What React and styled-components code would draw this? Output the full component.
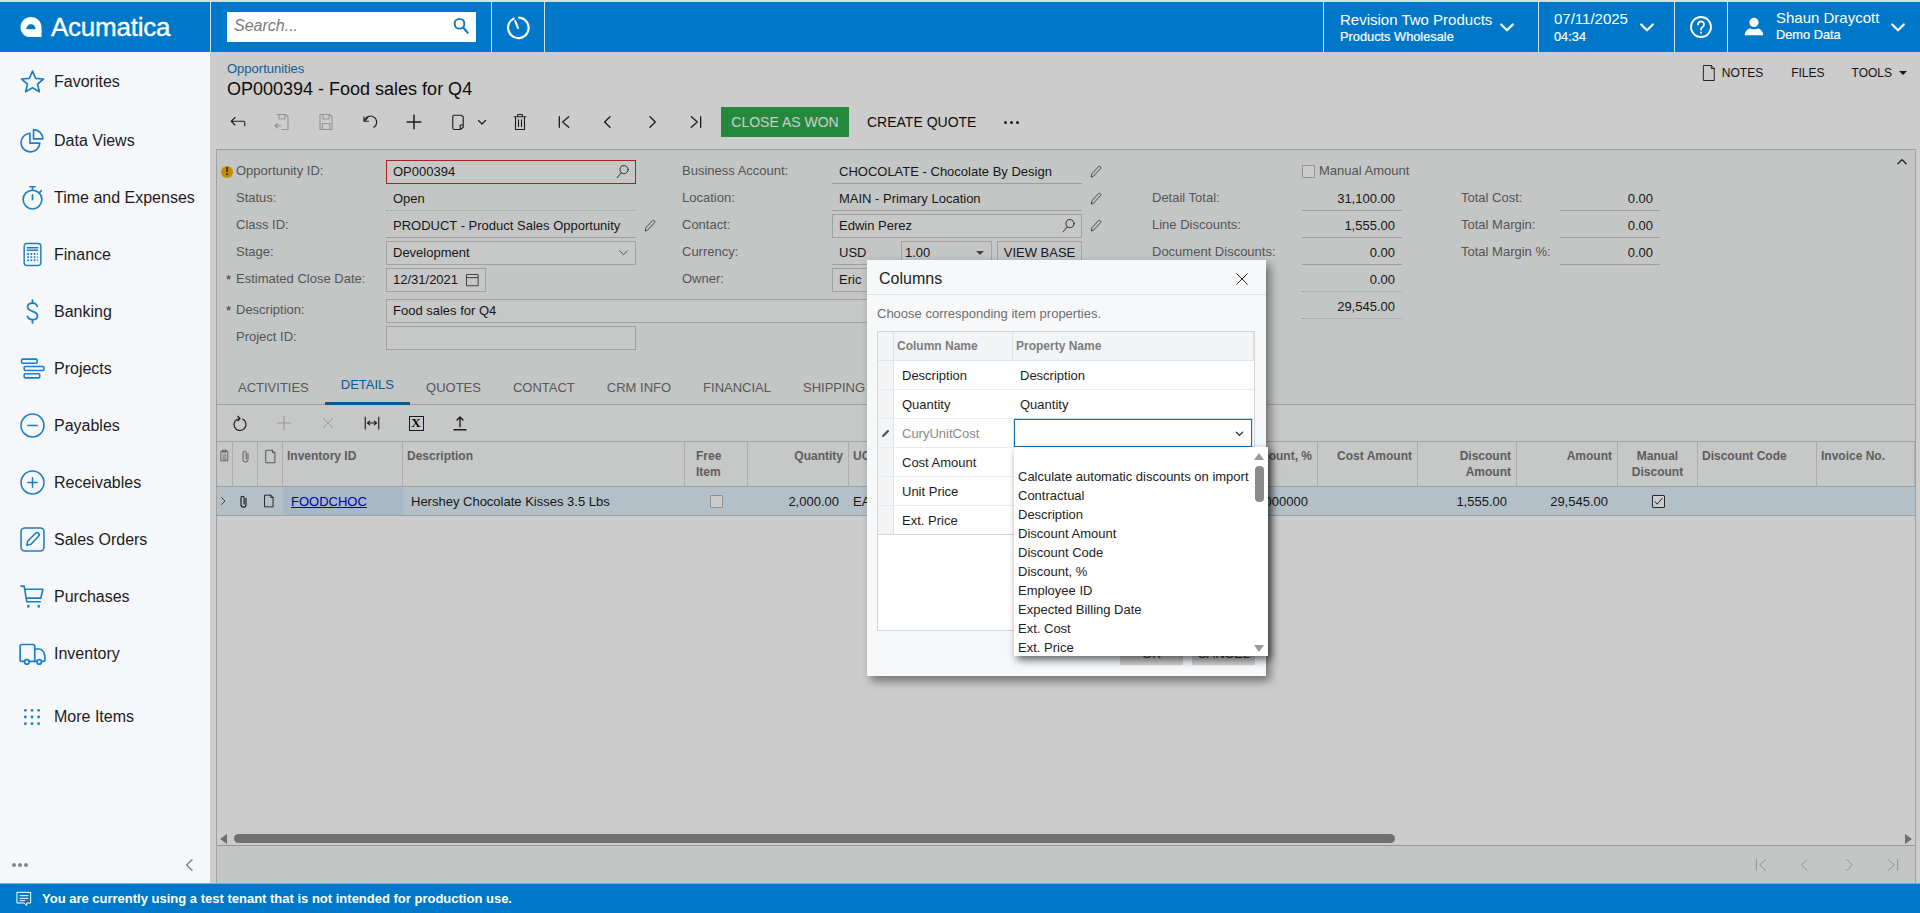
import React from 'react';
import styled, { createGlobalStyle } from 'styled-components';

const BLUE = '#0078c9';
const ICON_BLUE = '#1b7fc6';

const GlobalStyle = createGlobalStyle`
  html, body { margin: 0; padding: 0; height: 100%; }
  body { font-family: "Liberation Sans", Arial, sans-serif; font-size: 13px; color: #222; background: #fff; }
  * { box-sizing: border-box; }
`;

const Page = styled.div`
  display: flex;
  flex-direction: column;
  height: 100vh;
  overflow: hidden;
`;

const Svg = styled.svg.attrs(({ $s = 24, $vb = 24 }) => ({
  width: $s,
  height: $s,
  viewBox: `0 0 ${$vb} ${$vb}`,
  fill: 'none',
  stroke: 'currentColor',
  strokeLinecap: 'round',
  strokeLinejoin: 'round',
}))`
  display: block;
  flex: none;
  stroke-width: ${({ $w = 1.5 }) => $w};
  color: ${({ $c = 'inherit' }) => $c};
`;

/* top bar */
const TopBar = styled.header`
  display: flex;
  height: 52px;
  flex: none;
  background: ${BLUE};
  border-top: 2px solid #d3dfe8;
  color: #fff;
`;

const TopCell = styled.div`
  display: flex;
  align-items: center;
  width: ${({ $w }) => $w}px;
  flex: ${({ $grow }) => ($grow ? 1 : 'none')};
  padding-left: ${({ $pl = 0 }) => $pl}px;
  justify-content: ${({ $center }) => ($center ? 'center' : 'flex-start')};
  border-left: ${({ $line }) => ($line ? '1px solid #cfe3f2' : 'none')};
`;

const LogoText = styled.span`
  font-size: 26px;
  line-height: 30px;
  margin-left: 9px;
  letter-spacing: -0.25px;
  -webkit-text-stroke: 0.35px #fff;
`;

const SearchBox = styled.div`
  display: flex;
  align-items: center;
  justify-content: space-between;
  width: 249px;
  height: 30px;
  padding: 0 6px 2px 7px;
  background: #fff;
  color: #7b7b7b;
  font-size: 16px;
  font-style: italic;
`;

const StackText = styled.div`
  display: flex;
  flex-direction: column;
  flex: 1;
  padding: ${({ $pt = 0 }) => $pt}px 0 ${({ $pb = 0 }) => $pb}px ${({ $pl = 0 }) => $pl}px;
`;

const TopMain = styled.span`
  font-size: 15px;
  line-height: 18px;
`;

const TopSub = styled.span`
  font-size: 12.8px;
  line-height: 16px;
  margin-top: ${({ $mt = 0 }) => $mt}px;
  -webkit-text-stroke: 0.2px #fff;
`;

const TopChevron = styled.span`
  display: flex;
  margin-right: ${({ $mr = 0 }) => $mr}px;
`;

/* body */
const Body = styled.div`
  display: flex;
  flex: 1;
  min-height: 0;
`;

const Sidebar = styled.nav`
  display: flex;
  flex-direction: column;
  width: 210px;
  flex: none;
  padding-top: 3px;
  background: #f5f7fa;
`;

const SideItem = styled.div`
  display: flex;
  align-items: center;
  height: 57px;
  flex: none;
  padding-left: 20px;
  font-size: 16px;
  color: #1c1c1c;
  white-space: nowrap;

  &:first-child {
    margin-top: -2px;
    margin-bottom: 2px;
  }
  &:nth-child(12) {
    margin-top: 6px;
  }
`;

const SideIcon = styled.span`
  display: flex;
  justify-content: center;
  width: 24px;
  margin-right: 10px;
  color: ${ICON_BLUE};
`;

const SideFooter = styled.div`
  display: flex;
  align-items: center;
  justify-content: space-between;
  height: 36px;
  margin-top: auto;
  padding: 0 12px 0 12px;
  color: #7d7d85;
`;

const Dots = styled.span`
  display: flex;
  gap: ${({ $gap = 2 }) => $gap}px;

  i {
    width: ${({ $size = 4 }) => $size}px;
    height: ${({ $size = 4 }) => $size}px;
    border-radius: 50%;
    background: ${({ $c = '#85858d' }) => $c};
  }
`;

const Main = styled.main`
  position: relative;
  display: flex;
  flex-direction: column;
  flex: 1;
  min-width: 0;
  background: #fff;
`;

const Overlay = styled.div`
  position: absolute;
  inset: 0;
  z-index: 1;
  background: rgba(0, 0, 0, 0.2);
`;

const Header = styled.div`
  display: flex;
  justify-content: space-between;
  height: 97px;
  flex: none;
  padding: 9px 13px 0 6px;
`;

const TitleBlock = styled.div`
  padding-left: 11px;
`;

const Breadcrumb = styled.div`
  font-size: 13px;
  line-height: 15px;
  color: #1077b9;
`;

const Title = styled.div`
  margin-top: 2px;
  font-size: 18px;
  line-height: 22px;
  color: #111;
`;

const Toolbar = styled.div`
  display: flex;
  align-items: center;
  height: 30px;
  margin-top: 7px;
`;

const ToolIcon = styled.span`
  display: flex;
  align-items: center;
  justify-content: center;
  width: ${({ $w = 44 }) => $w}px;
  height: 30px;
  color: ${({ $off }) => ($off ? '#b9b9b9' : '#262626')};
`;

const SplitChevron = styled(ToolIcon)`
  margin: 0 7px 0 -7px;
`;

const GreenButton = styled.span`
  display: flex;
  align-items: center;
  justify-content: center;
  width: 128px;
  height: 30px;
  margin-left: 3px;
  background: #2eac4b;
  color: #fff;
  font-size: 14px;
`;

const TextButton = styled.span`
  padding: 0 18px;
  font-size: 14px;
  color: #111;
`;

const Actions = styled.div`
  display: flex;
  align-items: center;
  height: 24px;
  font-size: 12px;
  color: #1a1a1a;
`;

const ActionItem = styled.span`
  display: flex;
  align-items: center;
  gap: 4px;
  margin-left: ${({ $ml = 0 }) => $ml}px;
`;

const Caret = styled.i`
  width: 0;
  height: 0;
  margin-left: 3px;
  border-left: 4px solid transparent;
  border-right: 4px solid transparent;
  border-top: 4px solid ${({ $c = '#222' }) => $c};
`;

/* form */
const Panel = styled.section`
  display: flex;
  flex-direction: column;
  flex: 1;
  min-height: 0;
  margin: 0 4px 0 6px;
  background: #f6f8f8;
  border: 1px solid #c8c8c8;
  border-bottom: none;
`;

const Collapse = styled.span`
  position: absolute;
  top: 103px;
  right: 11px;
  color: #222;
`;

const FormColumns = styled.div`
  display: flex;
  height: 143px;
  flex: none;
  padding-top: 8px;
`;

const FormColumn = styled.div`
  width: ${({ $w }) => $w}px;
  flex: none;
`;

const Field = styled.div`
  display: flex;
  align-items: center;
  height: 27px;
`;

const Mark = styled.span`
  display: flex;
  align-items: center;
  justify-content: flex-end;
  width: 19px;
  padding-right: ${({ $pr = 2 }) => $pr}px;
  flex: none;
  color: #444;
`;

const Warn = styled.span`
  display: flex;
  align-items: center;
  justify-content: center;
  width: 12px;
  height: 12px;
  border-radius: 50%;
  background: #f0b400;
  color: #222;
  font-size: 10px;
  font-weight: 700;
`;

const Label = styled.span`
  width: ${({ $w }) => $w}px;
  flex: none;
  padding-bottom: 2px;
  color: #6a6a6a;
  white-space: nowrap;
`;

const InputBox = styled.div`
  display: flex;
  align-items: center;
  justify-content: space-between;
  width: ${({ $w = 250 }) => $w}px;
  height: 24px;
  flex: none;
  padding: 0 5px 0 6px;
  background: ${({ $plain }) => ($plain ? 'transparent' : '#f8f9f9')};
  border: 1px solid ${({ $error }) => ($error ? '#d52b2b' : '#c9c9c9')};
  color: #1c1c1c;
  white-space: nowrap;
`;

const ReadValue = styled.div`
  display: flex;
  align-items: center;
  justify-content: ${({ $right }) => ($right ? 'flex-end' : 'flex-start')};
  width: ${({ $w = 250 }) => $w}px;
  height: 24px;
  flex: none;
  padding: ${({ $right }) => ($right ? '0 7px 0 0' : '0 0 0 7px')};
  border-bottom: 1px ${({ $dotted }) => ($dotted ? 'dotted' : 'solid')} #c6c6c6;
  color: #1c1c1c;
`;

const PencilSlot = styled.span`
  display: flex;
  margin-left: 7px;
  color: #444;
`;

const RateBox = styled(InputBox)`
  margin-left: 0;
  padding: 0 7px 0 3px;
`;

const ViewBase = styled.span`
  display: flex;
  align-items: center;
  justify-content: center;
  width: 85px;
  height: 24px;
  margin-left: 5px;
  border: 1px solid #c9c9c9;
  font-size: 13px;
  color: #222;
`;

const CheckBox = styled.span`
  display: flex;
  align-items: center;
  justify-content: center;
  width: 13px;
  height: 13px;
  flex: none;
  background: #fff;
  border: 1px solid ${({ $dark }) => ($dark ? '#333' : '#b4b4b4')};
  border-radius: 1px;
  color: #222;
`;

const CheckLabel = styled.span`
  margin-left: 4px;
  padding-bottom: 2px;
  color: #6a6a6a;
`;

const DescBlock = styled.div`
  margin-top: 4px;
`;

/* tabs */
const Tabs = styled.div`
  display: flex;
  height: 54px;
  flex: none;
  align-items: flex-end;
  padding-left: 5px;
  border-bottom: 1px solid #c9c9c9;
`;

const Tab = styled.span`
  display: flex;
  align-items: center;
  height: 36px;
  padding: ${({ $active }) => ($active ? '0 16px 3px' : '0 16px')};
  margin-bottom: -1px;
  color: ${({ $active }) => ($active ? '#0b72b5' : '#6f6f6f')};
  border-bottom: ${({ $active }) => ($active ? '3px solid #0b72b5' : 'none')};
`;

const GridBar = styled.div`
  display: flex;
  align-items: center;
  height: 36px;
  flex: none;
  padding-left: 1px;
  background: #f8f9f9;
`;

const GridIcon = styled.span`
  display: flex;
  align-items: center;
  justify-content: center;
  width: 44px;
  color: ${({ $off }) => ($off ? '#bdbdbd' : '#222')};
`;

const ExcelMark = styled.span`
  display: flex;
  align-items: center;
  justify-content: center;
  width: 15px;
  height: 15px;
  border: 1.5px solid #222;
  font-family: "Liberation Serif", serif;
  font-size: 13px;
  font-weight: 700;
  color: #111;
`;

/* grid */
const columns = '16px 25px 25px 120px 282px 63px 101px 100px 269px 100px 100px 99px 101px 80px 119px 1fr';

const GridHead = styled.div`
  display: grid;
  grid-template-columns: ${columns};
  height: 46px;
  flex: none;
  background: #f8f9f9;
  border-top: 1px solid #c9c9c9;
  border-bottom: 1px solid #c9c9c9;
`;

const HeadCell = styled.div`
  padding: 6px ${({ $right }) => ($right ? '5px' : '4px')} 0 ${({ $pl = 4 }) => $pl}px;
  border-right: 1px solid #d9d9d9;
  font-size: 12px;
  font-weight: 700;
  line-height: 16px;
  color: #757575;
  white-space: pre-line;
  text-align: ${({ $right, $mid }) => ($right ? 'right' : $mid ? 'center' : 'left')};
`;

const HeadIcon = styled(HeadCell)`
  display: flex;
  justify-content: center;
  padding: 7px 0 0;
  color: #666;
`;

const GridRow = styled.div`
  display: grid;
  grid-template-columns: ${columns};
  height: 29px;
  flex: none;
  align-items: stretch;
  background: #e1f0fa;
  border-bottom: 1px solid #c9c9c9;
`;

const Cell = styled.div`
  display: flex;
  align-items: center;
  justify-content: ${({ $right, $mid }) => ($right ? 'flex-end' : $mid ? 'center' : 'flex-start')};
  padding: 0 ${({ $right }) => ($right ? '10px' : '4px')} 0 ${({ $pl = 4 }) => $pl}px;
  background: ${({ $active }) => ($active ? '#d1e6f8' : 'transparent')};
  color: #1c1c1c;
  white-space: nowrap;
`;

const Link = styled.a`
  color: #0000d8;
  text-decoration: underline;
`;

const Spacer = styled.div`
  flex: 1;
  background: #fff;
`;

const HScroll = styled.div`
  display: flex;
  align-items: center;
  height: 14px;
  flex: none;
  padding: 0 3px;
  background: #fff;
  border-bottom: 1px solid #bcbcbc;
`;

const Arrow = styled.i`
  width: 0;
  height: 0;
  border-top: 5px solid transparent;
  border-bottom: 5px solid transparent;
  ${({ $dir }) => ($dir === 'left' ? 'border-right: 7px solid #8b8b8b;' : 'border-left: 7px solid #8b8b8b; margin-left: auto;')}
`;

const HThumb = styled.div`
  width: 1161px;
  height: 9px;
  margin-left: 7px;
  border-radius: 5px;
  background: #8c8c8c;
`;

const Pager = styled.div`
  display: flex;
  align-items: center;
  justify-content: flex-end;
  height: 37px;
  flex: none;
  color: #b2b2b2;
`;

const PagerIcon = styled.span`
  display: flex;
  justify-content: center;
  width: 44px;
`;

/* dialog */
const Dialog = styled.div`
  position: absolute;
  z-index: 2;
  left: 657px;
  top: 208px;
  display: flex;
  flex-direction: column;
  width: 399px;
  height: 416px;
  background: #f7f8fa;
  box-shadow: 4px 5px 9px rgba(0, 0, 0, 0.45);
`;

const DialogHead = styled.div`
  display: flex;
  align-items: center;
  justify-content: space-between;
  height: 35px;
  flex: none;
  padding: 3px 15px 0 12px;
  border-bottom: 1px solid #dfe2e5;
  font-size: 16px;
  color: #1c1c1c;
`;

const DialogHint = styled.div`
  padding: 11px 0 0 10px;
  line-height: 15px;
  height: 36px;
  flex: none;
  color: #6e6e6e;
`;

const MapTable = styled.div`
  display: flex;
  flex-direction: column;
  width: 378px;
  height: 300px;
  flex: none;
  margin-left: 10px;
  background: #fff;
  border: 1px solid #d5d5d5;
`;

const mapColumns = '16px 119px 1fr';

const MapHead = styled.div`
  display: grid;
  grid-template-columns: ${mapColumns};
  height: 29px;
  flex: none;
  background: #f3f4f6;
  border-bottom: 1px solid #e2e6e9;
`;

const MapHeadCell = styled.div`
  display: flex;
  align-items: center;
  padding-left: 3px;
  border-right: 1px solid #dfe2e5;
  font-size: 12px;
  font-weight: 700;
  color: #7c7c7c;
`;

const MapRow = styled.div`
  display: grid;
  grid-template-columns: ${mapColumns};
  height: 29px;
  flex: none;
  border-bottom: 1px solid #e4edf2;

  &:last-child {
    border-bottom-color: #d5d5d5;
  }
`;

const Gutter = styled.div`
  display: flex;
  align-items: center;
  justify-content: center;
  background: #f3f4f6;
  border-right: 1px solid #dfe2e5;
  color: #555;
`;

const MapCell = styled.div`
  display: flex;
  align-items: center;
  padding-left: ${({ $pl = 8 }) => $pl}px;
  color: ${({ $muted }) => ($muted ? '#8a8a8a' : '#1c1c1c')};
`;

const EditCell = styled.div`
  display: flex;
  align-items: center;
  justify-content: flex-end;
  height: 28px;
  margin: 0 2px 0 1px;
  padding-right: 6px;
  border: 1px solid #0b72b5;
  box-shadow: 0 0 1px #0b72b5;
  color: #222;
`;

const DialogFooter = styled.div`
  display: flex;
  justify-content: flex-end;
  gap: 9px;
  padding: 10px 11px 0 0;
`;

const DialogButton = styled.span`
  display: flex;
  align-items: center;
  justify-content: center;
  width: 63px;
  height: 24px;
  background: #d4d4d4;
  color: #333;
`;

const Dropdown = styled.div`
  position: absolute;
  z-index: 3;
  left: 147px;
  top: 187px;
  display: flex;
  width: 254px;
  height: 209px;
  background: #fff;
  box-shadow: 3px 4px 8px rgba(0, 0, 0, 0.6);
`;

const OptionList = styled.div`
  flex: 1;
  overflow: hidden;
  padding: 1px 0 0 4px;
`;

const Option = styled.div`
  height: 19px;
  line-height: 19px;
  color: #222;
  white-space: nowrap;
`;

const VScroll = styled.div`
  display: flex;
  flex-direction: column;
  align-items: center;
  width: 14px;
  flex: none;
  padding: 6px 4px 4px 0;
`;

const VArrow = styled.i`
  width: 0;
  height: 0;
  margin-top: ${({ $down }) => ($down ? 'auto' : '0')};
  border-left: 5px solid transparent;
  border-right: 5px solid transparent;
  ${({ $down }) => ($down ? 'border-top: 7px solid #9a9a9a;' : 'border-bottom: 7px solid #9a9a9a;')}
`;

const VThumb = styled.div`
  width: 9px;
  height: 36px;
  margin-top: 6px;
  border-radius: 4px;
  background: #8b8b8b;
`;

/* status bar */
const StatusBar = styled.footer`
  display: flex;
  align-items: center;
  gap: 10px;
  height: 30px;
  flex: none;
  padding-left: 16px;
  background: ${BLUE};
  border-top: 1px solid #5db8ef;
  color: #fff;
  font-weight: 700;
  font-size: 13px;
`;

/* icons */
const Logo = () => (
  <Svg $s={22} $vb={24} $w={0}>
    <path
      fill="#fff"
      fillRule="evenodd"
      d="M12 1C5.700 1 .5 6 .5 12.200c0 6 4.700 10.800 10.500 10.800H23.500V12.200C23.500 6 18.300 1 12 1zM7 14.500c0-3.200 2.200-5.500 5-5.500s5 2.300 5 5.500z"
    />
  </Svg>
);

const SearchIcon = () => (
  <Svg $s={18} $w={2.6} $c="#0a78c8">
    <circle cx="10" cy="9" r="6.500" />
    <path d="M15 14l6 7" />
  </Svg>
);

const Loupe = () => (
  <Svg $s={15} $w={1.500} $c="#333">
    <circle cx="14.500" cy="9" r="6.500" />
    <path d="M10 14l-6.500 8" />
  </Svg>
);

const HistoryIcon = () => (
  <Svg $s={26} $w={2} $c="#fff">
    <path d="M8 4.300a9.500 9.500 0 1 0 5-1" />
    <path d="M12 13L9.500 6.500" />
  </Svg>
);

const ChevronDown = ({ s = 20, w = 2.6, c }) => (
  <Svg $s={s} $w={w} $c={c}>
    <path d="M5 9l7 7 7-7" />
  </Svg>
);

const HelpIcon = () => (
  <Svg $s={24} $w={1.800}>
    <circle cx="12" cy="12" r="10" />
    <path d="M9 9.500a3 3 0 1 1 4.600 2.500c-1 .7-1.600 1.300-1.600 2.500" />
    <path d="M12 17.500v.3" />
  </Svg>
);

const PersonIcon = () => (
  <Svg $s={22} $w={0}>
    <circle cx="12" cy="7" r="5" fill="#fff" />
    <path d="M2 21c0-5 3.500-7.500 6-7.500 2 1.300 6 1.300 8 0 2.500 0 6 2.500 6 7.500z" fill="#fff" />
  </Svg>
);

const sideIcons = {
  star: (
    <Svg $s={25} $w={1.600}>
      <path d="M12 2l3 7 7.500.6-5.700 4.900 1.800 7.400L12 18l-6.600 3.900 1.800-7.400L1.500 9.600 9 9z" />
    </Svg>
  ),
  pie: (
    <Svg $s={25} $w={1.600}>
      <path d="M9.500 5a9 9 0 1 0 9.500 9.500H9.500z" />
      <path d="M13 1.500a9 9 0 0 1 9 9h-9z" />
    </Svg>
  ),
  timer: (
    <Svg $s={25} $w={1.600}>
      <circle cx="12" cy="14" r="9" />
      <path d="M9.500 1.700h5M12 1.700V5M12 9.500V14M18.500 7.500l2-2" />
    </Svg>
  ),
  calc: (
    <Svg $s={25} $w={1.400}>
      <rect x="4" y="1.500" width="16" height="21" rx="2.500" />
      <path d="M7 5.500h10M7 8h10" />
      <path strokeDasharray="1.600 1.500" strokeLinecap="butt" strokeWidth="1.800" d="M7 11.500h10M7 14.500h10M7 17.500h10" />
    </Svg>
  ),
  dollar: (
    <Svg $s={25} $w={1.700}>
      <path d="M16.500 7c-.5-2-2.200-3-4.500-3-2.800 0-4.700 1.500-4.700 3.700 0 5 9.500 3.300 9.500 8.300 0 2.300-2 3.800-4.800 3.800-2.600 0-4.300-1.200-4.800-3.200" />
      <path d="M12 1v3M12 20v3" />
    </Svg>
  ),
  bars: (
    <Svg $s={25} $w={1.500}>
      <rect x="1.500" y="3" width="15" height="4" rx="1.200" />
      <rect x="4" y="10" width="19" height="4" rx="1.200" />
      <rect x="4" y="17" width="15" height="4" rx="1.200" />
    </Svg>
  ),
  minus: (
    <Svg $s={25} $w={1.500}>
      <circle cx="12" cy="12" r="11" />
      <path d="M7.500 12h9" />
    </Svg>
  ),
  plus: (
    <Svg $s={25} $w={1.500}>
      <circle cx="12" cy="12" r="11" />
      <path d="M7.500 12h9M12 7.500v9" />
    </Svg>
  ),
  pen: (
    <Svg $s={25} $w={1.500}>
      <rect x="1" y="1" width="22" height="22" rx="3.500" />
      <path d="M6.500 17.500l1-4L15 6c.8-.8 2-.8 2.800 0s.8 2 0 2.800L10.500 16.500z" />
    </Svg>
  ),
  cart: (
    <Svg $s={25} $w={1.600}>
      <path d="M1 2h3l2.500 15h13M5 5h17l-2 8.500H6.500" />
      <path strokeWidth="2.400" d="M8 21v.5M18 21v.5" />
    </Svg>
  ),
  truck: (
    <Svg $s={27} $w={1.500}>
      <path d="M5 19H2.500A1.500 1.500 0 0 1 1 17.500v-12A1.500 1.500 0 0 1 2.500 4h10A1.500 1.500 0 0 1 14 5.500V19H9" />
      <path d="M14 8h4c3 0 5 4 5 7v2.500A1.500 1.500 0 0 1 21.500 19H20M16 19h-2" />
      <circle cx="7" cy="19.500" r="2" />
      <circle cx="18" cy="19.500" r="2" />
    </Svg>
  ),
  dots: (
    <Svg $s={20} $w={3.400}>
      <path d="M4 4h.01M12 4h.01M20 4h.01M4 12h.01M12 12h.01M20 12h.01M4 20h.01M12 20h.01M20 20h.01" />
    </Svg>
  ),
};

const T = ({ d, s = 20, w = 1.500 }) => (
  <Svg $s={s} $w={w}>
    <path d={d} />
  </Svg>
);

const PATHS = {
  back: 'M8 6l-5 5 5 5M3 11h16.500c1 0 1.500 .7 1.500 1.500V17',
  saveBack: 'M5 2h12l3 3v17H12M8 2v6h8V2M3 17h7M6 14l-3 3 3 3',
  save: 'M4 2h13l3 3v17H4zM8 2v6h8V2M7 22v-8h10v8',
  undo: 'M9 6L4 11V5M4 11h6M5 11a8 8 0 1 1 12 8',
  plus: 'M12 3v18M3 12h18',
  clip: 'M7 3h9l3 2v14l-4 3H7a2 2 0 0 1-2-2V5a2 2 0 0 1 2-2zM19 16h-4v6',
  trash: 'M4 5h16M9 5V2h6v3M6 5v17h12V5M10 9v9M14 9v9',
  first: 'M5 4v16M19 4l-9 8 9 8',
  prev: 'M15 4l-8 8 8 8',
  next: 'M9 4l8 8-8 8',
  last: 'M5 4l9 8-9 8M19 4v16',
  caretRight: 'M9 5l7 7-7 7',
  close: 'M5 5l14 14M19 5L5 19',
  refresh: 'M9 3l3 3-3 3M12 6a8 8 0 1 0 3.500 .8',
  fit: 'M3 4v16M21 4v16M6 12h12M9 9.500L6 12l3 2.500M15 9.500l3 2.500-3 2.500',
  upload: 'M12 17V4M8 8l4-4 4 4M4 21h16',
  clipBoard: 'M6 4h12v18H6zM9 2h6v4H9zM9 11h6M9 15h6M9 19h6',
  paper: 'M16 7v10a4 4 0 0 1-8 0V6a2.500 2.500 0 0 1 5 0v10',
  file: 'M5 2h10l4 4v16H5zM15 2v4h4',
  pencil: 'M4 20l1-5L16 3c1-1 2.500-1 3.500 0s1 2.500 0 3.500L8 19z',
  calendar: 'M3 4h18v18H3zM3 9h18',
  up: 'M5 15l7-7 7 7',
};

const Pencil = () => <T d={PATHS.pencil} s={14} w={1.500} />;

const sideItems = [
  ['star', 'Favorites'],
  ['pie', 'Data Views'],
  ['timer', 'Time and Expenses'],
  ['calc', 'Finance'],
  ['dollar', 'Banking'],
  ['bars', 'Projects'],
  ['minus', 'Payables'],
  ['plus', 'Receivables'],
  ['pen', 'Sales Orders'],
  ['cart', 'Purchases'],
  ['truck', 'Inventory'],
  ['dots', 'More Items'],
];

const tabs = ['ACTIVITIES', 'DETAILS', 'QUOTES', 'CONTACT', 'CRM INFO', 'FINANCIAL', 'SHIPPING', 'ATTRIBUTES'];

const headers = [
  { text: 'Inventory ID' },
  { text: 'Description' },
  { text: 'Free\nItem', pl: 11 },
  { text: 'Quantity', right: true },
  { text: 'UOM' },
  { text: '' },
  { text: 'Discount, %', right: true },
  { text: 'Cost Amount', right: true },
  { text: 'Discount\nAmount', right: true },
  { text: 'Amount', right: true },
  { text: 'Manual\nDiscount', mid: true },
  { text: 'Discount Code' },
  { text: 'Invoice No.' },
];

const mapRows = [
  ['Description', 'Description'],
  ['Quantity', 'Quantity'],
  ['CuryUnitCost', null],
  ['Cost Amount', ''],
  ['Unit Price', ''],
  ['Ext. Price', ''],
];

const options = [
  '',
  'Calculate automatic discounts on import',
  'Contractual',
  'Description',
  'Discount Amount',
  'Discount Code',
  'Discount, %',
  'Employee ID',
  'Expected Billing Date',
  'Ext. Cost',
  'Ext. Price',
];

const App = () => (
  <Page>
    <GlobalStyle />
    <TopBar>
      <TopCell $w={210} $pl={20}>
        <Logo />
        <LogoText>Acumatica</LogoText>
      </TopCell>
      <TopCell $w={281} $pl={16} $line>
        <SearchBox>
          Search...
          <SearchIcon />
        </SearchBox>
      </TopCell>
      <TopCell $w={53} $center $line>
        <HistoryIcon />
      </TopCell>
      <TopCell $grow $line />
      <TopCell $w={215} $pl={16} $line>
        <StackText $pt={1}>
          <TopMain>Revision Two Products</TopMain>
          <TopSub>Products Wholesale</TopSub>
        </StackText>
        <TopChevron $mr={21}>
          <ChevronDown />
        </TopChevron>
      </TopCell>
      <TopCell $w={136} $pl={15} $line>
        <StackText>
          <TopMain>07/11/2025</TopMain>
          <TopSub $mt={1}>04:34</TopSub>
        </StackText>
        <TopChevron $mr={17}>
          <ChevronDown />
        </TopChevron>
      </TopCell>
      <TopCell $w={53} $center $line>
        <HelpIcon />
      </TopCell>
      <TopCell $w={193} $pl={15} $line>
        <PersonIcon />
        <StackText $pl={11} $pb={2}>
          <TopMain>Shaun Draycott</TopMain>
          <TopSub>Demo Data</TopSub>
        </StackText>
        <TopChevron $mr={12}>
          <ChevronDown />
        </TopChevron>
      </TopCell>
    </TopBar>

    <Body>
      <Sidebar>
        {sideItems.map(([icon, label]) => (
          <SideItem key={label}>
            <SideIcon>{sideIcons[icon]}</SideIcon>
            {label}
          </SideItem>
        ))}
        <SideFooter>
          <Dots>
            <i />
            <i />
            <i />
          </Dots>
          <T d={PATHS.prev} s={16} w={2} />
        </SideFooter>
      </Sidebar>

      <Main>
        <Header>
          <div>
            <TitleBlock>
              <Breadcrumb>Opportunities</Breadcrumb>
              <Title>OP000394 - Food sales for Q4</Title>
            </TitleBlock>
            <Toolbar>
              <ToolIcon><T d={PATHS.back} s={18} /></ToolIcon>
              <ToolIcon $off><T d={PATHS.saveBack} s={18} /></ToolIcon>
              <ToolIcon $off><T d={PATHS.save} s={18} /></ToolIcon>
              <ToolIcon><T d={PATHS.undo} s={18} /></ToolIcon>
              <ToolIcon><T d={PATHS.plus} s={18} w={2} /></ToolIcon>
              <ToolIcon><T d={PATHS.clip} s={18} /></ToolIcon>
              <SplitChevron $w={18}><ChevronDown s={12} w={2.500} /></SplitChevron>
              <ToolIcon><T d={PATHS.trash} s={18} /></ToolIcon>
              <ToolIcon><T d={PATHS.first} s={16} w={2} /></ToolIcon>
              <ToolIcon><T d={PATHS.prev} s={16} w={2} /></ToolIcon>
              <ToolIcon><T d={PATHS.next} s={16} w={2} /></ToolIcon>
              <ToolIcon><T d={PATHS.last} s={16} w={2} /></ToolIcon>
              <GreenButton>CLOSE AS WON</GreenButton>
              <TextButton>CREATE QUOTE</TextButton>
              <ToolIcon $w={34}>
                <Dots $size={3} $gap={3} $c="#222">
                  <i />
                  <i />
                  <i />
                </Dots>
              </ToolIcon>
            </Toolbar>
          </div>
          <Actions>
            <ActionItem>
              <T d={PATHS.file} s={18} w={1.200} />
              NOTES
            </ActionItem>
            <ActionItem $ml={28}>FILES</ActionItem>
            <ActionItem $ml={27}>
              TOOLS
              <Caret />
            </ActionItem>
          </Actions>
        </Header>

        <Panel>
          <Collapse>
            <T d={PATHS.up} s={14} w={2.200} />
          </Collapse>
          <FormColumns>
            <FormColumn $w={465}>
              <Field>
                <Mark $pr={3}><Warn>!</Warn></Mark>
                <Label $w={150}>Opportunity ID:</Label>
                <InputBox $error>OP000394<Loupe /></InputBox>
              </Field>
              <Field>
                <Mark />
                <Label $w={150}>Status:</Label>
                <ReadValue $dotted>Open</ReadValue>
              </Field>
              <Field>
                <Mark />
                <Label $w={150}>Class ID:</Label>
                <ReadValue>PRODUCT - Product Sales Opportunity</ReadValue>
                <PencilSlot><Pencil /></PencilSlot>
              </Field>
              <Field>
                <Mark />
                <Label $w={150}>Stage:</Label>
                <InputBox>Development<ChevronDown s={13} w={1.800} c="#666" /></InputBox>
              </Field>
              <Field>
                <Mark $pr={5}>*</Mark>
                <Label $w={150}>Estimated Close Date:</Label>
                <InputBox $w={100}>12/31/2021<T d={PATHS.calendar} s={15} w={1.200} /></InputBox>
              </Field>
            </FormColumn>
            <FormColumn $w={470}>
              <Field>
                <Label $w={150}>Business Account:</Label>
                <ReadValue>CHOCOLATE - Chocolate By Design</ReadValue>
                <PencilSlot><Pencil /></PencilSlot>
              </Field>
              <Field>
                <Label $w={150}>Location:</Label>
                <ReadValue>MAIN - Primary Location</ReadValue>
                <PencilSlot><Pencil /></PencilSlot>
              </Field>
              <Field>
                <Label $w={150}>Contact:</Label>
                <InputBox>Edwin Perez<Loupe /></InputBox>
                <PencilSlot><Pencil /></PencilSlot>
              </Field>
              <Field>
                <Label $w={150}>Currency:</Label>
                <ReadValue $w={69}>USD</ReadValue>
                <RateBox $w={91} $plain>1.00<Caret $c="#555" /></RateBox>
                <ViewBase>VIEW BASE</ViewBase>
              </Field>
              <Field>
                <Label $w={150}>Owner:</Label>
                <InputBox>Eric</InputBox>
              </Field>
            </FormColumn>
            <FormColumn $w={309}>
              <Field>
                <Label $w={150} />
                <CheckBox />
                <CheckLabel>Manual Amount</CheckLabel>
              </Field>
              <Field>
                <Label $w={150}>Detail Total:</Label>
                <ReadValue $w={100} $right>31,100.00</ReadValue>
              </Field>
              <Field>
                <Label $w={150}>Line Discounts:</Label>
                <ReadValue $w={100} $right>1,555.00</ReadValue>
              </Field>
              <Field>
                <Label $w={150}>Document Discounts:</Label>
                <ReadValue $w={100} $right>0.00</ReadValue>
              </Field>
              <Field>
                <Label $w={150} />
                <ReadValue $w={100} $right $dotted>0.00</ReadValue>
              </Field>
              <Field>
                <Label $w={150} />
                <ReadValue $w={100} $right $dotted>29,545.00</ReadValue>
              </Field>
            </FormColumn>
            <FormColumn $w={199}>
              <Field />
              <Field>
                <Label $w={99}>Total Cost:</Label>
                <ReadValue $w={100} $right>0.00</ReadValue>
              </Field>
              <Field>
                <Label $w={99}>Total Margin:</Label>
                <ReadValue $w={100} $right>0.00</ReadValue>
              </Field>
              <Field>
                <Label $w={99}>Total Margin %:</Label>
                <ReadValue $w={100} $right>0.00</ReadValue>
              </Field>
            </FormColumn>
          </FormColumns>
          <DescBlock>
            <Field>
              <Mark $pr={5}>*</Mark>
              <Label $w={150}>Description:</Label>
              <InputBox $w={696}>Food sales for Q4</InputBox>
            </Field>
            <Field>
              <Mark />
              <Label $w={150}>Project ID:</Label>
              <InputBox />
            </Field>
          </DescBlock>
          <Tabs>
            {tabs.map((tab) => (
              <Tab key={tab} $active={tab === 'DETAILS'}>{tab}</Tab>
            ))}
          </Tabs>
          <GridBar>
            <GridIcon><T d={PATHS.refresh} s={18} /></GridIcon>
            <GridIcon $off><T d={PATHS.plus} s={18} /></GridIcon>
            <GridIcon $off><T d={PATHS.close} s={16} /></GridIcon>
            <GridIcon><T d={PATHS.fit} s={18} /></GridIcon>
            <GridIcon><ExcelMark>X</ExcelMark></GridIcon>
            <GridIcon><T d={PATHS.upload} s={18} w={1.800} /></GridIcon>
          </GridBar>
          <GridHead>
            <HeadIcon><T d={PATHS.clipBoard} s={13} /></HeadIcon>
            <HeadIcon><T d={PATHS.paper} s={15} /></HeadIcon>
            <HeadIcon><T d={PATHS.file} s={15} /></HeadIcon>
            {headers.map((h, i) => (
              <HeadCell key={i} $right={h.right} $mid={h.mid} $pl={h.pl}>{h.text}</HeadCell>
            ))}
          </GridHead>
          <GridRow>
            <Cell $mid $pl={0}><T d={PATHS.caretRight} s={12} w={1.500} /></Cell>
            <Cell $mid $pl={0}><T d={PATHS.paper} s={15} w={1.800} /></Cell>
            <Cell $mid $pl={0}><T d={PATHS.file} s={14} /></Cell>
            <Cell $active $pl={8}><Link>FOODCHOC</Link></Cell>
            <Cell $pl={8}>Hershey Chocolate Kisses 3.5 Lbs</Cell>
            <Cell $mid><CheckBox /></Cell>
            <Cell $right>2,000.00</Cell>
            <Cell $pl={4}>EA</Cell>
            <Cell />
            <Cell $right>0.000000</Cell>
            <Cell />
            <Cell $right>1,555.00</Cell>
            <Cell $right>29,545.00</Cell>
            <Cell $mid>
              <CheckBox $dark>
                <Svg $s={11} $w={2}><path d="M4 12l5 6L20 5" /></Svg>
              </CheckBox>
            </Cell>
            <Cell />
            <Cell />
          </GridRow>
          <Spacer />
          <HScroll>
            <Arrow $dir="left" />
            <HThumb />
            <Arrow $dir="right" />
          </HScroll>
          <Pager>
            <PagerIcon><T d={PATHS.first} s={16} /></PagerIcon>
            <PagerIcon><T d={PATHS.prev} s={16} /></PagerIcon>
            <PagerIcon><T d={PATHS.next} s={16} /></PagerIcon>
            <PagerIcon><T d={PATHS.last} s={16} /></PagerIcon>
          </Pager>
        </Panel>

        <Overlay />

        <Dialog>
          <DialogHead>
            Columns
            <T d={PATHS.close} s={18} w={1.300} />
          </DialogHead>
          <DialogHint>Choose corresponding item properties.</DialogHint>
          <MapTable>
            <MapHead>
              <Gutter />
              <MapHeadCell>Column Name</MapHeadCell>
              <MapHeadCell>Property Name</MapHeadCell>
            </MapHead>
            {mapRows.map(([name, prop]) => (
              <MapRow key={name}>
                <Gutter>{prop === null && <T d="M4 20l3-1L20 6l-2-2L5 17z" s={9} w={3} />}</Gutter>
                <MapCell $muted={prop === null}>{name}</MapCell>
                {prop === null ? (
                  <EditCell><ChevronDown s={11} w={2.600} /></EditCell>
                ) : (
                  <MapCell $pl={7}>{prop}</MapCell>
                )}
              </MapRow>
            ))}
          </MapTable>
          <DialogFooter>
            <DialogButton>OK</DialogButton>
            <DialogButton>CANCEL</DialogButton>
          </DialogFooter>
          <Dropdown>
            <OptionList>
              {options.map((o, i) => (
                <Option key={i}>{o}</Option>
              ))}
            </OptionList>
            <VScroll>
              <VArrow />
              <VThumb />
              <VArrow $down />
            </VScroll>
          </Dropdown>
        </Dialog>
      </Main>
    </Body>

    <StatusBar>
      <Svg $s={16} $w={1.500}>
        <path d="M2 2h20v16h-6v4l-4-4H2z" />
        <path d="M6 7h12M6 11h12M6 14.500h7" />
      </Svg>
      You are currently using a test tenant that is not intended for production use.
    </StatusBar>
  </Page>
);

export default App;
